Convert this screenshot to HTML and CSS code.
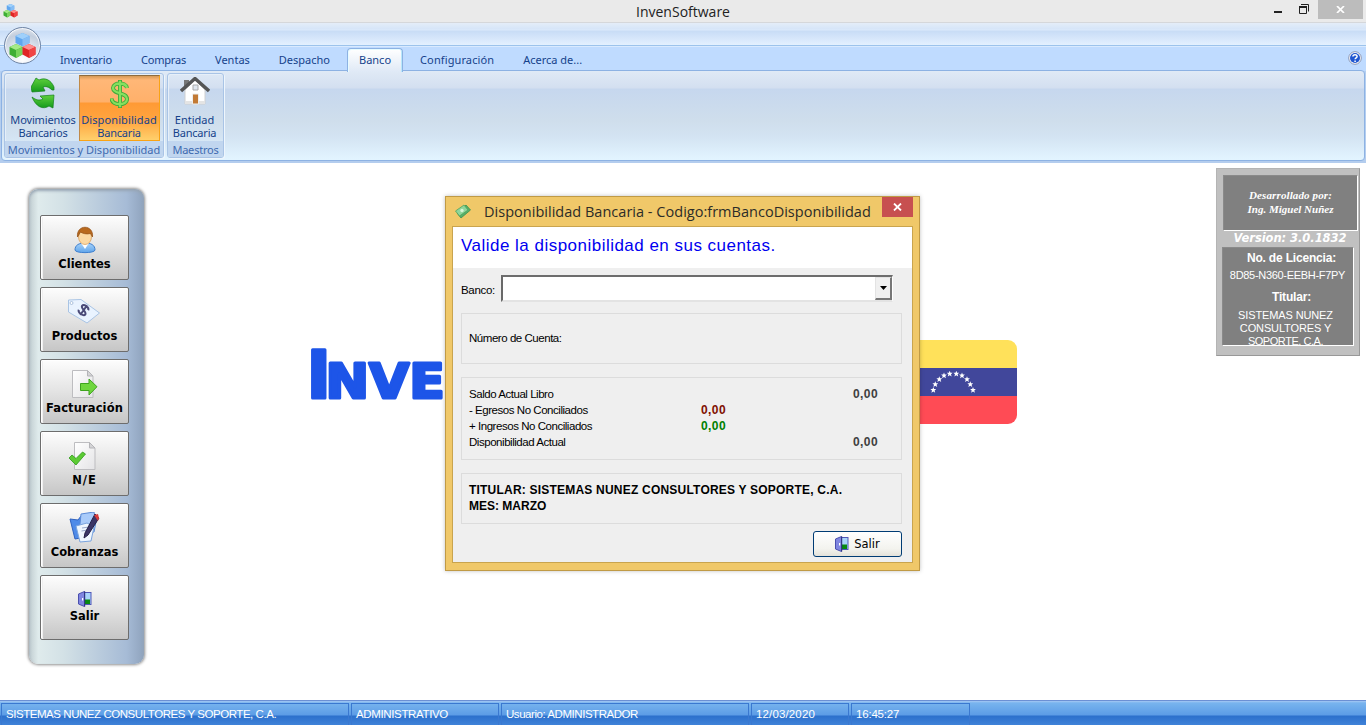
FILE: index.html
```html
<!DOCTYPE html>
<html lang="es">
<head>
<meta charset="utf-8">
<title>InvenSoftware</title>
<link rel="stylesheet" href="styles.css">
</head>
<body>
<svg class="defs" width="0" height="0">
  <defs>
    <linearGradient id="gBlue" x1="0" y1="0" x2="0" y2="1"><stop offset="0" stop-color="#a9d4fb"/><stop offset="1" stop-color="#5fa4ea"/></linearGradient>
    <linearGradient id="gGreen" x1="0" y1="0" x2="0" y2="1"><stop offset="0" stop-color="#5fd03c"/><stop offset="1" stop-color="#149a1c"/></linearGradient>
    <linearGradient id="gPage" x1="0" y1="0" x2="1" y2="1"><stop offset="0" stop-color="#fff"/><stop offset="1" stop-color="#e4e4e6"/></linearGradient>
    <symbol id="cubes" viewBox="0 0 26 26">
      <path d="M13 0l7 3v7l-7 3.500-7-3.500V3z" fill="#5fa6ee"/><path d="M13 0l7 3-7 3.300L6 3z" fill="#9fd0fb"/><path d="M13 6.300L20 3v7l-7 3.500z" fill="#86bdf5"/>
      <path d="M6.500 11l6.500 3v7.500l-6.500 3.500L0 21.500V14z" fill="#3fae35"/><path d="M6.500 11l6.500 3-6.500 3L0 14z" fill="#a5ea87"/><path d="M6.500 17l6.500-3v7.500L6.500 25z" fill="#79d45c"/>
      <path d="M19.500 11l6.500 3v7.500L19.500 25 13 21.500V14z" fill="#e02525"/><path d="M19.500 11l6.500 3-6.500 3-6.500-3z" fill="#ff8d8d"/><path d="M19.500 17l6.500-3v7.500L19.500 25z" fill="#f04444"/>
    </symbol>
    <symbol id="door" viewBox="0 0 14 16">
      <path d="M5 1h8.500v13H5z" fill="#5056b8"/><path d="M7 2h5.500v11H7z" fill="#a9d4fb"/><path d="M7 8.500h5V13H7z" fill="#078a10"/>
      <path d="M.5 3L6.500.5v15L.5 13z" fill="#8086e0" stroke="#4a4fae"/><path d="M6.200.5h1v15h-1z" fill="#2f3278"/><path d="M4 7h1.200v2.500H4z" fill="#fff"/>
    </symbol>
    <symbol id="page" viewBox="0 0 22 28">
      <path d="M.5.500h15l5.500 5.500v21.500H.5z" fill="url(#gPage)" stroke="#bdbdc0"/><path d="M15.500.500V6H21z" fill="#d4d4d6" stroke="#b4b4b8"/>
    </symbol>
  </defs>
</svg>

<header class="titlebar">
  <svg class="app-mini" width="15" height="14"><use href="#cubes"/></svg>
  <h1 class="app-title">InvenSoftware</h1>
  <div class="win-controls">
    <svg class="wc-min" width="8" height="2"><path d="M0 0h8v2H0z" fill="#222"/></svg>
    <svg class="wc-max" width="10" height="10"><path d="M.5 3h7v6.500h-7zM2 .5h7.500v7" fill="none" stroke="#222"/><path d="M0 2h8v2H0z" fill="#222"/></svg>
    <span class="wc-close"><svg width="9" height="7"><path d="M1 0l7 7M8 0L1 7" stroke="#fff" stroke-width="1.700"/></svg></span>
  </div>
</header>

<section class="ribbon">
  <div class="quick"></div>
  <span class="orb"><svg width="27" height="26"><use href="#cubes"/></svg></span>
  <nav class="tabs">
    <a class="tab tight-s">Inventario</a><a class="tab tight-m">Compras</a><a class="tab">Ventas</a><a class="tab">Despacho</a><a class="tab active">Banco</a><a class="tab wide-s">Configuración</a><a class="tab">Acerca de...</a>
    <svg class="help" width="14" height="14"><circle cx="7" cy="7" r="6.300" fill="#fff" stroke="#8a96b4"/><circle cx="7" cy="7" r="5" fill="#2057d0"/><path d="M4.900 5.600c0-2.600 4.300-2.600 4.200 0 0 1.300-2 1.300-2 2.700M7.100 9.400v1.500" fill="none" stroke="#fff" stroke-width="1.500"/></svg>
  </nav>
  <div class="panel">
    <div class="group movs">
      <div class="tools">
        <div class="tool mov">
          <svg width="24" height="32" viewBox="0 0 24 32"><path d="M0 10L5 1l3 2c6-3 12 0 15 7v3h-2c-3-3-6-4-9-3l2 4-13 1z" fill="url(#gGreen)" stroke="#13801a" stroke-width=".7"/><path d="M1 20c4 3 7 4 11 2l-3-3 14-1-1 13-4-2c-6 4-13 1-17-9z" fill="url(#gGreen)" stroke="#13801a" stroke-width=".7"/></svg>
          <span class="tight-s">Movimientos</span><span class="tight-m">Bancarios</span>
        </div>
        <div class="tool disp">
          <svg width="20" height="28" viewBox="0 0 20 28"><path d="M17 8c-1-6-14-6-14 0 0 6.500 14 4 14 11 0 7-15 7-15.500-.5M10 0v28" fill="none" stroke="#3fa83a" stroke-width="4"/><path d="M17 8c-1-6-14-6-14 0 0 6.500 14 4 14 11 0 7-15 7-15.500-.5M10 .8v26.400" fill="none" stroke="#84e05e" stroke-width="2.300"/></svg>
          <span class="wide-s">Disponibilidad</span><span class="tight-m">Bancaria</span>
        </div>
      </div>
      <div class="caption">Movimientos y Disponibilidad</div>
    </div>
    <div class="group">
      <div class="tools">
        <div class="tool ent">
          <svg width="30" height="28" viewBox="0 0 30 28"><path d="M4 3h5v8H4z" fill="#777"/><path d="M5 13L15 3l10 10v14H5z" fill="#fff" stroke="#d0d0d0"/><path d="M5 24h20v3H5z" fill="#e4e4e4"/><path d="M1 14L15 1.500 29 14" fill="none" stroke="#555" stroke-width="3.400"/><path d="M13 8h5v5h-5z" fill="#dfe6ee" stroke="#aaa"/><path d="M12.500 17h6v10h-6z" fill="#c27a35" stroke="#eee"/></svg>
          <span>Entidad</span><span class="tight-m">Bancaria</span>
        </div>
      </div>
      <div class="caption tight-m">Maestros</div>
    </div>
  </div>
</section>

<main class="desk">
  <aside class="sidebar">
    <button class="side-btn"><svg width="22" height="28" viewBox="0 0 22 28"><path d="M1 24c0-5 4-7 10-7s10 2 10 7c0 3.500-20 3.500-20 0z" fill="url(#gBlue)" stroke="#3f80cf"/><path d="M7 17l4 6 4-6z" fill="#fff"/><ellipse cx="11" cy="11" rx="6.500" ry="7.500" fill="#fbd9a4" stroke="#d69a55" stroke-width=".7"/><path d="M3.500 11C2-2 20-2 18.500 11l-2-3.500c-4 1-8 0-10-1.500z" fill="#b8691e" stroke="#8f4a10" stroke-width=".7"/></svg><span>Clientes</span></button>
    <button class="side-btn tag"><svg width="32" height="25" viewBox="0 0 32 25"><path d="M.5 1L13 .5 31.500 14 19 24 .5 13z" fill="#e9f3ff" stroke="#a9c4e4"/><circle cx="3.500" cy="4" r="1.500" fill="#fff" stroke="#9ab4d4" stroke-width=".8"/><g transform="rotate(35 15.500 11)" fill="none" stroke="#4a4a78" stroke-width="2"><path d="M19.500 8.500c-.5-3-7.500-3-7.500 0s7.500 2 7.500 5-7.500 3-8 0M15.700 5v12"/></g></svg><span>Productos</span></button>
    <button class="side-btn"><svg width="26" height="28" viewBox="0 0 26 28"><svg x="0" y="0" width="22" height="28"><use href="#page"/></svg><path d="M8.500 13.500H17V9l8 7.700L17 25v-4.500H8.500z" fill="#6fd63e" stroke="#3fa41f"/></svg><span class="wide-s">Facturación</span></button>
    <button class="side-btn ne"><svg width="27" height="28" viewBox="0 0 27 28"><svg x="5" y="0" width="22" height="28"><use href="#page"/></svg><path d="M0 16l3-3 4 3.500L13.500 10l3 2L7 23z" fill="#5ccb34" stroke="#2f9a1c" stroke-width=".8"/></svg><span>N/E</span></button>
    <button class="side-btn low"><svg width="31" height="31" viewBox="0 0 31 31"><path d="M1 7l8 1 3-4 12-1-3 21-15 3z" fill="#4f8be8" stroke="#2f62c0"/><path d="M12 2l13-2 2 10-2 10-15 2z" fill="#a9cbfa" stroke="#5b8ad6"/><path d="M7 14l11-3 7 4-3 14-11 1z" fill="#eef6ff" stroke="#7aa4de"/><path d="M13 16l7-1M12.500 19l6-1" stroke="#9ac"/><path d="M26 2l4 4-11 17-4 3 1-5z" fill="#3a3566" stroke="#252048"/><path d="M25 3l4-1 1 4-1 3z" fill="#d93a3a"/></svg><span>Cobranzas</span></button>
    <button class="side-btn low"><svg width="14" height="16"><use href="#door"/></svg><span>Salir</span></button>
  </aside>

  <div class="brand">
    <svg class="wordmark" width="240" height="80" viewBox="0 0 240 80"><text class="wm" x="-3.500" y="58" font-size="66">I</text><text class="wm" x="15.500" y="58" font-size="48" textLength="163" lengthAdjust="spacingAndGlyphs">NVEN</text></svg>
    <svg class="flag" width="127" height="84" viewBox="0 0 127 84">
      <path d="M0 0h127v28H0z" fill="#ffe15a"/><path d="M0 28h127v28H0z" fill="#41479b"/><path d="M0 56h127v28H0z" fill="#ff4b55"/>
      <defs><path id="st" d="M0-3l.8 2h2.100L1.300.5l.6 2.200L0 1.500l-1.900 1.200.6-2.200L-2.900-1h2.100z" fill="#fff"/></defs>
      <use href="#st" x="43.300" y="50"/><use href="#st" x="45.300" y="44.300"/><use href="#st" x="49.300" y="39.300"/><use href="#st" x="54" y="35.600"/><use href="#st" x="59.700" y="33.700"/><use href="#st" x="66.300" y="33.700"/><use href="#st" x="72" y="35.600"/><use href="#st" x="77" y="39.300"/><use href="#st" x="80.300" y="44.300"/><use href="#st" x="83" y="50"/>
    </svg>
  </div>

  <aside class="license">
    <div class="dev"><span class="wide-s">Desarrollado por:</span><span>Ing. Miguel Nuñez</span></div>
    <div class="version">Version: 3.0.1832</div>
    <div class="lic">
      <b>No. de Licencia:</b>
      <p class="key">8D85-N360-EEBH-F7PY</p>
      <b>Titular:</b>
      <p class="owner"><span>SISTEMAS NUNEZ</span><span>CONSULTORES Y</span><span class="last">SOPORTE, C.A.</span></p>
    </div>
  </aside>

  <section class="dialog">
    <header class="dlg-bar">
      <svg width="16" height="15" viewBox="0 0 16 15"><path d="M2 9l9-8 4.500 5L6 14z" fill="#56b068" stroke="#3a9250" stroke-width=".8"/><path d="M.5 7L9 1l4 5-8.500 6z" fill="#8fd69a" stroke="#4fa35f" stroke-width=".8"/><circle cx="7" cy="6.500" r="1.700" fill="#d6f5d8"/></svg>
      <h2>Disponibilidad Bancaria - Codigo:frmBancoDisponibilidad</h2>
      <span class="dlg-close"><svg width="9" height="8"><path d="M1 .5l7 7M8 .5l-7 7" stroke="#fff" stroke-width="1.800"/></svg></span>
    </header>
    <div class="dlg-body">
      <div class="prompt">Valide la disponibilidad en sus cuentas.</div>
      <div class="bank-row"><label>Banco:</label><div class="combo"><span class="drop"><svg width="7" height="4"><path d="M0 0h7L3.500 4z"/></svg></span></div></div>
      <div class="box account">Número de Cuenta:</div>
      <div class="box amounts">
        <span>Saldo Actual Libro</span><b></b><b class="tot">0,00</b>
        <span>- Egresos No Conciliados</span><b class="neg">0,00</b><b></b>
        <span>+ Ingresos No Conciliados</span><b class="pos">0,00</b><b></b>
        <span>Disponibilidad Actual</span><b></b><b class="tot">0,00</b>
      </div>
      <div class="box holder"><span>TITULAR: SISTEMAS NUNEZ CONSULTORES Y SOPORTE, C.A.</span><span class="mes">MES: MARZO</span></div>
      <button class="exit"><svg width="14" height="16"><use href="#door"/></svg><span>Salir</span></button>
    </div>
  </section>
</main>

<footer class="status">
  <span class="cell c1">SISTEMAS NUNEZ CONSULTORES Y SOPORTE, C.A.</span><span class="cell c2">ADMINISTRATIVO</span><span class="cell c3">Usuario: ADMINISTRADOR</span><span class="cell c4">12/03/2020</span><span class="cell c5">16:45:27</span>
</footer>
</body>
</html>
```
FILE: styles.css
```css
* { box-sizing: border-box; }
body { margin: 0; width: 1366px; height: 725px; display: flex; flex-direction: column; overflow: hidden; background: #fff; font: 11px "Noto Sans", sans-serif; color: #000; }
h1, h2, p { margin: 0; font-weight: normal; }
span { white-space: nowrap; }
svg { flex: none; }
.defs { position: absolute; }
.tight-s { letter-spacing: -.13px; }
.tight-m { letter-spacing: -.2px; }
.wide-s { letter-spacing: .11px; }

.titlebar { height: 23px; flex: none; display: flex; background: #eaeaea; border-bottom: 1px solid #d5d7da; padding-left: 3px; }
.app-mini { margin-top: 4px; }
.app-title { flex: 1; text-align: center; font: 14px/23px "Open Sans", sans-serif; color: #222; padding-left: 74px; }
.win-controls { display: flex; align-items: flex-start; }
.wc-min { margin: 11px 17px 0 0; }
.wc-max { margin: 4px 9px 0 0; }
.wc-close { width: 45px; height: 19px; background: #bcbcbc; display: flex; align-items: center; justify-content: center; margin-right: 3px; }

.ribbon { position: relative; height: 140px; flex: none; background: linear-gradient(#b4d0f3, #b4cdee); }
.quick { height: 24px; background: linear-gradient(#e4edf8 0, #d6e5f8 6px, #dceafb 7px, #c8dcf6 8px, #e3f0ff 22px, #9cc3ec 22px, #9cc3ec 23px, #d9eaff 23px); }
.orb { position: absolute; left: 4px; top: 4px; width: 37px; height: 37px; border-radius: 50%; border: 1px solid #6f84a4; background: radial-gradient(circle at 50% 90%, #fff, #dde4ee 45%, #c3cedd 70%, #f2f5f9); box-shadow: inset 0 0 0 1px #f4f7fb; display: flex; align-items: center; justify-content: center; }
.tabs { height: 24px; background: #bfdbff; display: flex; align-items: flex-start; padding-left: 48px; gap: 5px; color: #15428b; }
.tab { height: 24px; padding: 0 12px; line-height: 26px; }
.tab.active { height: 24px; margin-top: 1px; line-height: 22px; padding: 0 11px; border: 1px solid #8db2e3; border-bottom: 0; border-radius: 4px 4px 0 0; background: linear-gradient(#fff, #dfe9f6); z-index: 1; box-shadow: inset 1px 1px #e6fbff, inset -1px 0 #b8e8fb; }
.help { margin: 4px 4px 0 auto; }
.panel { height: 91px; margin: -1px 1px 0 1px; border: 1px solid #8db2e3; border-radius: 4px; display: flex; padding: 2px; gap: 3px; background: linear-gradient(#e0eaf6 0, #d3dff0 17px, #c6d7ee 18px, #cfdeec 50px, #d3e3f2 65px, #e2f4ff 88px); }
.group { height: 85px; border: 1px solid #a9c4e6; border-radius: 3px; box-shadow: 1px 1px #eef6fd, inset 1px 1px #e6eff9; display: flex; flex-direction: column; overflow: hidden; }
.movs { width: 160px; }
.tools { flex: 1; display: flex; padding-top: 1px; }
.tool { display: flex; flex-direction: column; align-items: center; line-height: 13px; color: #15428b; height: 66px; }
.tool svg { margin-bottom: auto; }
.mov { width: 74px; padding: 2px 0 2px 2px; }
.disp { width: 81px; padding: 4px 0 1px; border: 1px solid #f9a315; border-top-color: #8e6c3f; border-left-color: #c08a48; background: linear-gradient(#d59a58 0, #ffb777 4px, #ffb06a 26px, #ff9a35 27px, #ffa540 45px, #ffd06c 100%); }
.disp span { margin-left: -1px; }
.ent { width: 55px; padding: 2px 2px 2px 0; }
.caption { height: 16px; line-height: 17px; text-align: center; background: #c1d6ef; color: #3e6ab0; }

.desk { position: relative; flex: 1; display: flex; align-items: flex-start; }
.sidebar { width: 115px; height: 475px; margin: 26px 0 0 29px; padding: 26px 0 0 11px; border-radius: 9px; background: linear-gradient(90deg, #c0ccd0, #dfebec 8%, #d3e1e6 30%, #a6bbd6 85%, #8fa3bd); box-shadow: 0 0 3px 1px #8e8e8e, inset 0 2px 3px #97a5b3; display: flex; flex-direction: column; gap: 7px; }
.side-btn { width: 89px; height: 65px; padding: 2px 0 0; border: 1px solid #6d6d6d; border-radius: 2px; box-shadow: inset 1px 1px #fff, inset 2px 0 #f0f0f0; background: linear-gradient(#fdfdfd, #e6e6e6 45%, #c6c6c6); display: flex; flex-direction: column; align-items: center; justify-content: center; gap: 3px; font: bold 11.500px/15px "DejaVu Sans", sans-serif; color: #000; }
.side-btn.low { padding: 0; gap: 2px; }
.side-btn.tag { gap: 5px; padding-top: 3px; }
.tag svg { margin-left: -2px; }
.ne svg { margin-left: -5px; }
.ne span { letter-spacing: 1px; }
.brand { width: 707px; margin: 177px 0 0 166px; display: flex; justify-content: space-between; }
.wm { font-family: "DejaVu Sans", sans-serif; font-weight: bold; fill: #1d55e8; stroke: #1d55e8; stroke-width: 3; stroke-linejoin: round; }
.flag { border-radius: 9px; }
.license { width: 144px; height: 188px; margin: 5px 0 0 199px; padding: 6px 2px 0 6px; background: #c0c0c0; border: 1px solid #b4b4b4; border-right-color: #989898; border-bottom-color: #989898; color: #fff; text-align: center; }
.dev { height: 56px; width: 135px; padding-top: 12px; background: #808080; border: 1px solid #8a8a8a; border-right-color: #fff; border-bottom-color: #fff; display: flex; flex-direction: column; align-items: center; font: italic bold 11px/14px "Liberation Serif", serif; }
.version { height: 16px; font: italic bold 11.500px/15px "DejaVu Sans", sans-serif; letter-spacing: -.05px; }
.lic { width: 132px; height: 99px; margin-left: -1px; overflow: hidden; background: #808080; border: 1px solid #8a8a8a; border-right-color: #fff; border-bottom-color: #fff; padding: 3px 0 0 7px; font: 11px/13px "Liberation Sans", sans-serif; }
.lic b { display: block; height: 16px; font-size: 12px; line-height: 15px; letter-spacing: -.18px; }
.key { margin: 2px 0 8px -8px; letter-spacing: -.3px; }
.owner { display: flex; flex-direction: column; align-items: center; margin-left: -12px; padding-top: 3px; letter-spacing: -.12px; }
.owner .last { letter-spacing: -.45px; }

.dialog { position: absolute; left: 445px; top: 33px; width: 475px; height: 375px; padding: 0 7px 7px; background: #f0c869; border: 1px solid #c09a45; box-shadow: 0 0 4px rgba(0,0,0,.25); display: flex; flex-direction: column; }
.dlg-bar { height: 30px; flex: none; display: flex; padding-left: 2px; }
.dlg-bar svg { margin-top: 7px; }
.dlg-bar h2 { margin-left: 13px; flex: 1; min-width: 0; font: 14.500px/29px "Open Sans", sans-serif; letter-spacing: .02px; color: #2c2c28; white-space: nowrap; }
.dlg-close { width: 31px; height: 20px; margin-right: -1px; background: #c75050; display: flex; justify-content: center; }
.dlg-close svg { margin-top: 6px; }
.dlg-body { flex: 1; margin: -1px 0 0 -1px; width: 461px; border: 1px solid #c9a44e; background: #efefef; display: flex; flex-direction: column; font: 11.500px/16px "Liberation Sans", sans-serif; letter-spacing: -.46px; }
.prompt { height: 41px; background: #fff; color: #0000f0; font-size: 17px; line-height: 37px; padding-left: 8px; letter-spacing: .48px; }
.bank-row { display: flex; padding: 7px 0 0 8px; height: 45px; }
.bank-row label { width: 40px; line-height: 30px; letter-spacing: -.3px; }
.combo { width: 392px; height: 27px; background: #fff; border: 2px solid #696969; border-top-color: #6d6d6d; border-right: 1px solid #fff; border-bottom-color: #e3e3e3; display: flex; justify-content: flex-end; }
.drop { width: 17px; background: #f0f0f0; border: 1px solid #e3e3e3; border-right: 2px solid #777; border-bottom: 2px solid #777; display: flex; align-items: center; justify-content: center; }
.box { margin-left: 8px; width: 441px; border: 1px solid #dcdcdc; padding-left: 7px; }
.account { height: 51px; line-height: 49px; margin-bottom: 13px; }
.amounts { height: 83px; margin-bottom: 13px; padding-top: 8px; display: grid; grid-template: repeat(4, 16px) / 206px 51px 152px; text-align: left; }
.amounts b { text-align: right; font-size: 12px; letter-spacing: .4px; }
.amounts .tot { color: #404040; }
.amounts .neg { color: #801000; }
.amounts .pos { color: #008000; }
.holder { height: 51px; padding-top: 8px; display: flex; flex-direction: column; font-weight: bold; font-size: 12px; letter-spacing: .21px; }
.mes { letter-spacing: 0; }
.exit { width: 89px; height: 26px; margin: 7px 0 0 360px; padding: 0; border: 1px solid #003c74; border-radius: 3px; background: linear-gradient(#fff, #f3f3ee 70%, #e4e2da); display: flex; align-items: center; justify-content: center; gap: 5px; font: 11.500px/15px "DejaVu Sans", sans-serif; color: #000; }

.status { height: 25px; flex: none; display: flex; gap: 2px; padding: 2px 0 0 1px; border-top: 1px solid #6c90d4; background: linear-gradient(#a5c8f4 0, #78b4ee 2px, #5c9ce6 14px, #2c70cc 15px, #3f82d8); color: #fff; font: 11.500px/21px "Liberation Sans", sans-serif; letter-spacing: -.45px; }
.cell { padding-left: 4px; border: 1px solid #3a78d0; border-bottom: 0; }
.c1 { width: 348px; }
.c2 { width: 148px; letter-spacing: -.36px; }
.c3 { width: 248px; }
.c4 { width: 98px; letter-spacing: .14px; }
.c5 { width: 119px; letter-spacing: -.2px; }
```
